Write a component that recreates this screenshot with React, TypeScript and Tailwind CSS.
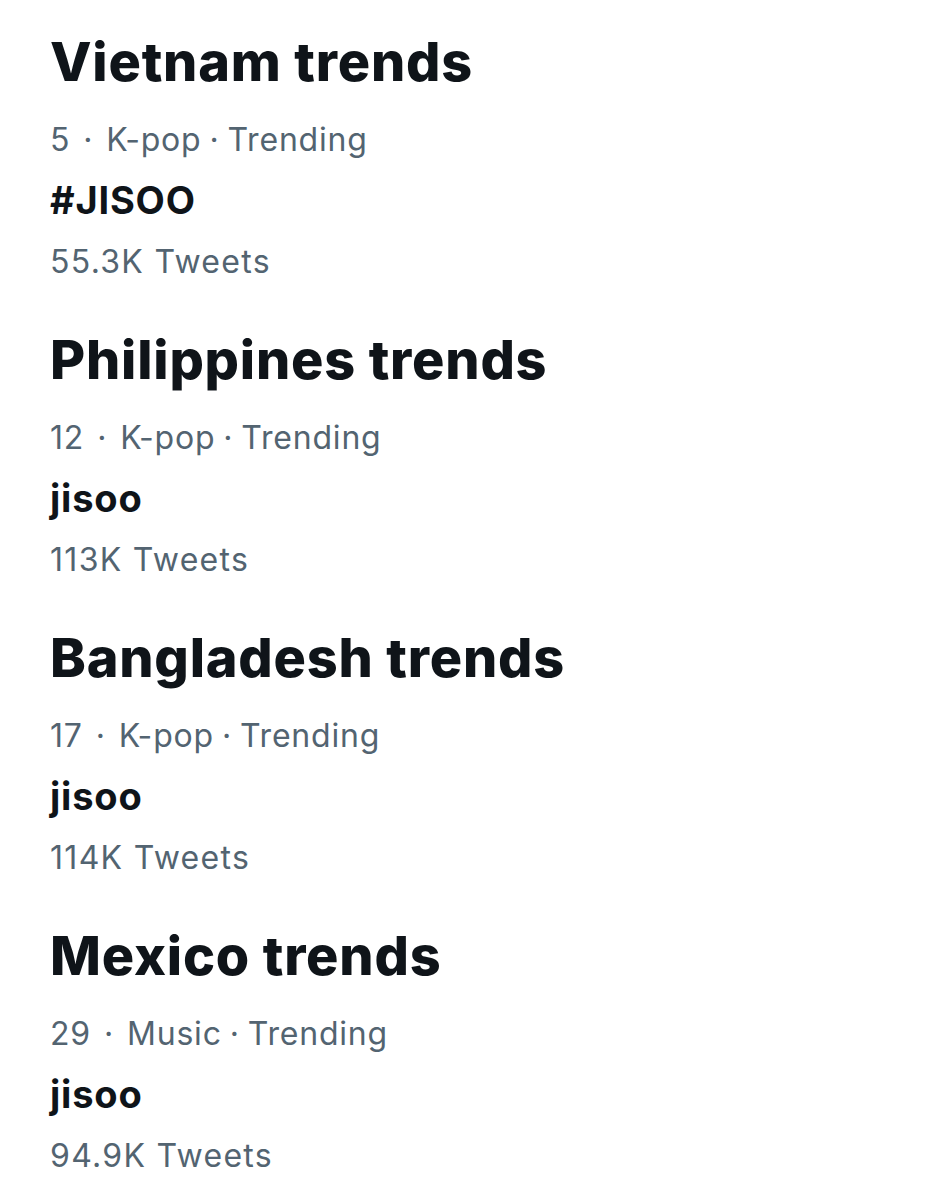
import React from "react";

const sections = [
  { title: "Vietnam trends", meta: ["5", "K-pop", "Trending"], name: "#JISOO", count: "55.3K Tweets" },
  { title: "Philippines trends", meta: ["12", "K-pop", "Trending"], name: "jisoo", count: "113K Tweets" },
  { title: "Bangladesh trends", meta: ["17", "K-pop", "Trending"], name: "jisoo", count: "114K Tweets" },
  { title: "Mexico trends", meta: ["29", "Music", "Trending"], name: "jisoo", count: "94.9K Tweets" },
];

export default function App() {
  return (
    <div
      className="w-[950px] h-[1200px] bg-white px-[50px] pt-[30px] flex flex-col gap-[44px]"
      style={{ fontFamily: "Inter, 'Noto Sans', sans-serif" }}
    >
      {sections.map((s) => (
        <div key={s.title} className="flex flex-col">
          <div className="text-[54px] leading-[64px] font-extrabold text-[#0f1419] tracking-[0.8px]">{s.title}</div>
          <div className="mt-[24px] text-[32px] leading-[44px] text-[#536471] tracking-[0.8px] flex items-center">
            <span>{s.meta[0]}</span>
            <span className="mx-[13px]">·</span>
            <span>{s.meta[1]}</span>
            <span className="mx-[8px]">·</span>
            <span>{s.meta[2]}</span>
          </div>
          <div className="mt-[16px] text-[38px] leading-[44px] font-bold text-[#0f1419] tracking-[0.8px]">{s.name}</div>
          <div className="mt-[18px] text-[32px] leading-[44px] text-[#536471] tracking-[1.3px]">{s.count}</div>
        </div>
      ))}
    </div>
  );
}
